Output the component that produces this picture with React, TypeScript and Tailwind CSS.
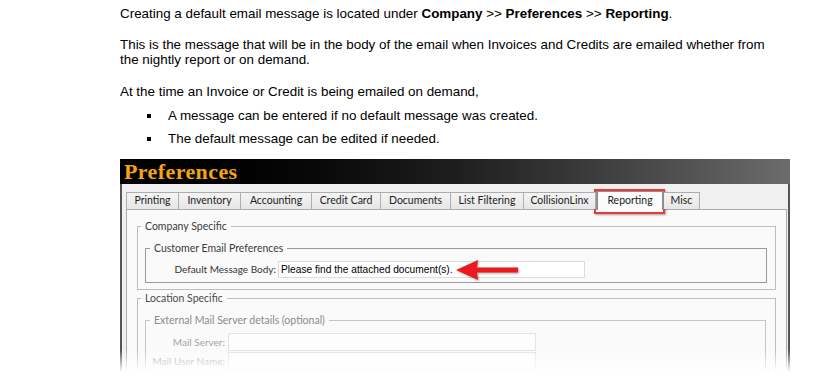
const tabs = [
  { label: 'Printing', w: 53 },
  { label: 'Inventory', w: 62 },
  { label: 'Accounting', w: 71 },
  { label: 'Credit Card', w: 69 },
  { label: 'Documents', w: 70 },
  { label: 'List Filtering', w: 73 },
  { label: 'CollisionLinx', w: 72 },
  { label: 'Reporting', w: 68, active: true },
  { label: 'Misc', w: 36 },
];

const ui = "font-['Lato','Open_Sans',sans-serif]";

export default function App() {
  return (
    <div className="w-[816px] h-[391px] bg-white overflow-hidden text-black font-['Liberation_Sans',Arial,sans-serif]">
      {/* intro text */}
      <div className="pl-[120px] pt-[6px] text-[13.4px] leading-[15px]">
        <p className="whitespace-nowrap">
          Creating a default email message is located under <b>Company</b> &gt;&gt; <b>Preferences</b> &gt;&gt;{' '}
          <b>Reporting</b>.
        </p>
        <p className="mt-[16px] whitespace-nowrap">
          This is the message that will be in the body of the email when Invoices and Credits are emailed whether from
          <br />
          the nightly report or on demand.
        </p>
        <p className="mt-[17px] whitespace-nowrap">At the time an Invoice or Credit is being emailed on demand,</p>
        <ul className="mt-[9px] space-y-[8px]">
          {['A message can be entered if no default message was created.', 'The default message can be edited if needed.'].map(
            (t, i) => (
              <li key={i} className="flex items-center h-[15px]">
                <span className="ml-[27px] mr-[17px] w-[4px] h-[4px] bg-black" />
                {t}
              </li>
            )
          )}
        </ul>
      </div>

      {/* preferences window */}
      <div className="relative mt-[13px] ml-[120px] w-[670px] h-[213px] overflow-hidden">
        <div className="h-[25px] bg-linear-to-r from-black via-[#1e1e1e] to-[#6c6c6c] pl-[4px]">
          <span className="font-['Liberation_Serif',serif] font-bold text-[22px] leading-[25px] tracking-[0.4px] text-[#f2a60c]">
            Preferences
          </span>
        </div>
        <div className={`h-[188px] border-l-2 border-r-2 border-[#555] bg-[#f0f0f0] pt-[8px] ${ui}`}>
          <div className="flex items-end h-[17px] pl-[4px] relative z-10">
            {tabs.map((t, i) => (
              <div
                key={t.label}
                style={{ width: t.w }}
                className={
                  t.active
                    ? 'h-[19px] -mb-px flex items-center justify-center border-x-2 border-t border-[#8f8f8f] bg-[#fbfbfb] text-[10.5px] text-[#222]'
                    : `h-[17px] flex items-center justify-center border-t border-r border-[#adadad] bg-linear-to-b from-[#f4f4f4] to-[#e6e6e6] text-[10.5px] text-[#222] ${i === 0 ? 'border-l' : ''}`
                }
              >
                {t.label}
              </div>
            ))}
          </div>
          <div className="ml-[4px] w-[661px] h-[200px] border border-[#acacac] bg-[#fafafa] pt-[9px] pl-[10px]">
            <fieldset className="w-[639px] border border-[#bdbdbd] pb-[6px]">
              <legend className="ml-[3px] px-[4px] text-[10.5px] leading-[14px] text-[#3a3a3a]">Company Specific</legend>
              <fieldset className="mt-[8px] ml-[7px] w-[622px] border border-[#9a9a9a] pb-[4px]">
                <legend className="ml-[4px] px-[4px] text-[10.5px] leading-[14px] text-[#3a3a3a]">
                  Customer Email Preferences
                </legend>
                <div className="mt-[6px] flex items-center gap-[2px]">
                  <span className="w-[130px] text-right text-[10px] text-[#333]">Default Message Body:</span>
                  <div className="w-[307px] h-[17px] border border-[#dcdcdc] bg-white pl-[2px] font-['Liberation_Sans',Arial,sans-serif] text-[10.2px] leading-[15px] text-black">
                    Please find the attached document(s).
                  </div>
                </div>
              </fieldset>
            </fieldset>
            <fieldset className="mt-[1px] w-[639px] border border-[#bdbdbd] pb-[6px]">
              <legend className="ml-[3px] px-[4px] text-[10.5px] leading-[14px] text-[#4a4a4a]">Location Specific</legend>
              <fieldset className="mt-[8px] ml-[7px] w-[621px] border border-[#c4c4c4] pb-[20px]">
                <legend className="ml-[4px] px-[4px] text-[10.5px] leading-[14px] text-[#8a8a8a]">
                  External Mail Server details (optional)
                </legend>
                <div className="mt-[6px] flex items-center gap-[3px]">
                  <span className="w-[79px] text-right text-[10px] text-[#a5a5a5] whitespace-nowrap">Mail Server:</span>
                  <div className="w-[308px] h-[18px] border border-[#e4e4e4] bg-[#fdfdfd]" />
                </div>
                <div className="mt-[1px] flex items-center gap-[3px]">
                  <span className="w-[79px] text-right text-[10px] text-[#a5a5a5] whitespace-nowrap overflow-hidden">
                    Mail User Name:
                  </span>
                  <div className="w-[308px] h-[18px] border border-[#e4e4e4] bg-[#fdfdfd]" />
                </div>
              </fieldset>
            </fieldset>
          </div>
        </div>

        {/* highlight around Reporting tab */}
        <div className="absolute left-[474px] top-[30px] w-[71px] h-[25px] border-2 border-[#e83a3c] shadow-[1px_1px_2px_rgba(0,0,0,0.35)]" />

        {/* red arrow */}
        <svg
          className="absolute left-[336px] top-[100px] drop-shadow-[1px_1px_1px_rgba(0,0,0,0.35)]"
          width="64"
          height="22"
          viewBox="0 0 64 22"
        >
          <path d="M0 11 L22 1 L21 8.5 L62 8.5 L62 13.5 L21 13.5 L22 21 Z" fill="#ea1a1f" />
        </svg>

        {/* fade out at the bottom */}
        <div className="absolute left-0 right-0 bottom-0 h-[22px] bg-linear-to-b from-white/0 to-white" />
      </div>
    </div>
  );
}
